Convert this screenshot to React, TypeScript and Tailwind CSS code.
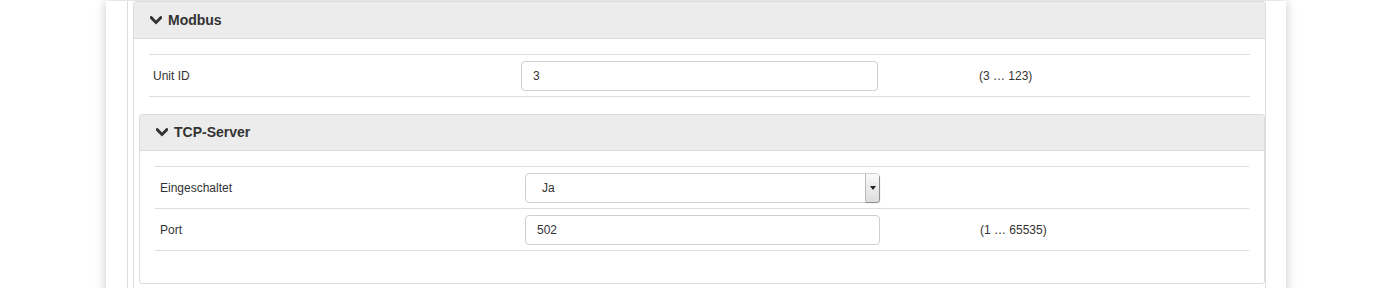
const Chevron = () => (
    <svg width="12" height="9" viewBox="0 0 12 9" className="shrink-0">
        <path d="M1.2 1.6 L6 6.4 L10.8 1.6" fill="none" stroke="#333" strokeWidth="2.8" strokeLinecap="square" />
    </svg>
)

const PanelHeader = ({ title, h }: { title: string; h: string }) => (
    <div className={`flex items-center gap-x-[6px] pl-[16px] bg-[#ececec] border-b border-[#dcdcdc] rounded-t-[3px] ${h}`}>
        <Chevron />
        <span className="text-[14px] font-bold text-[#333]">{title}</span>
    </div>
)

const TextInput = ({ value, w }: { value: string; w: string }) => (
    <div className={`h-[30px] ${w} border border-[#cfcfcf] rounded-[4px] bg-white flex items-center pl-[11px] text-[12px] text-[#333]`}>
        {value}
    </div>
)

const SelectBox = ({ value }: { value: string }) => (
    <div className="h-[30px] w-[355px] border border-[#cfcfcf] rounded-[4px] bg-white flex items-center">
        <span className="flex-1 pl-[16px] text-[12px] text-[#333]">{value}</span>
        <div className="h-[28px] w-[14px] border-l border-[#bbb] bg-gradient-to-b from-[#fafafa] to-[#dcdcdc] shadow-[1px_1px_1px_rgba(0,0,0,0.35)] flex items-center justify-center rounded-r-[3px]">
            <svg width="6" height="4" viewBox="0 0 6 4"><path d="M0 0 L6 0 L3 4 Z" fill="#222" /></svg>
        </div>
    </div>
)

interface RowProps {
    label: string
    labelW: string
    children: React.ReactNode
    hintGap?: string
    hint?: string
}

const Row = ({ label, labelW, children, hintGap, hint }: RowProps) => (
    <div className="flex items-center h-[42px] border-t border-[#dddddd]">
        <div className={`${labelW} shrink-0 text-[12px] text-[#333]`}>{label}</div>
        {children}
        {hint && <div className={`${hintGap} text-[12px] text-[#333]`}>{hint}</div>}
    </div>
)

const App = () => {
    return (
        <div className="w-[1375px] h-[288px] bg-white overflow-hidden" style={{ fontFamily: '"Liberation Sans", Arial, sans-serif' }}>
            <div className="ml-[106px] w-[1180px] h-[300px] bg-white shadow-[0_0_11px_rgba(0,0,0,0.22)]">
                <div className="ml-[21px] w-[1138px] h-full border-l border-[#dcdcdc]">
                    <div className="ml-[5px] mt-[1px] w-[1133px] h-[320px] border border-[#dcdcdc] rounded-t-[3px]">
                        <PanelHeader title="Modbus" h="h-[37px]" />
                        <div className="pt-[15px] pl-[15px] pr-[15px]">
                            <div className="mb-[17px] border-b border-[#dddddd]">
                                <Row label="Unit ID" labelW="w-[372px] pl-[4px]" hint="(3 … 123)" hintGap="ml-[101px]">
                                    <TextInput value="3" w="w-[357px]" />
                                </Row>
                            </div>
                        </div>
                        <div className="pl-[5px]">
                            <div className="border border-[#dcdcdc] rounded-[3px]">
                                <PanelHeader title="TCP-Server" h="h-[36px]" />
                                <div className="p-[15px]">
                                    <div className="mb-[17px] border-b border-[#dddddd]">
                                        <Row label="Eingeschaltet" labelW="w-[370px] pl-[5px]">
                                            <SelectBox value="Ja" />
                                        </Row>
                                        <Row label="Port" labelW="w-[370px] pl-[5px]" hint="(1 … 65535)" hintGap="ml-[100px]">
                                            <TextInput value="502" w="w-[355px]" />
                                        </Row>
                                    </div>
                                </div>
                            </div>
                        </div>
                    </div>
                </div>
            </div>
        </div>
    )
}

export default App
